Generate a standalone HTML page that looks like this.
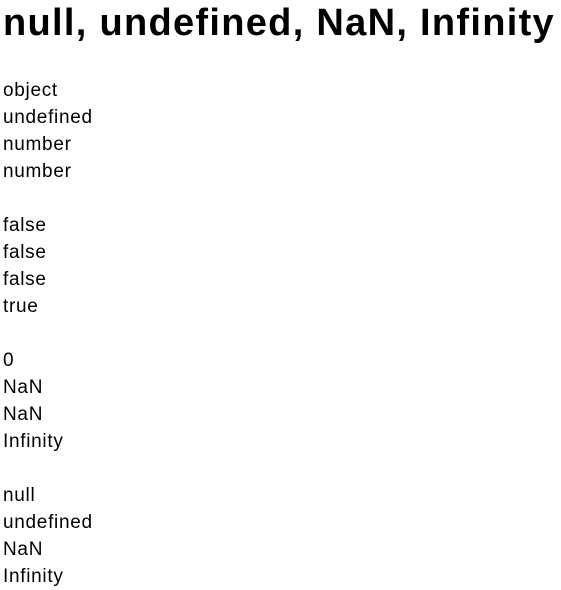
<!DOCTYPE html>
<html><head><meta charset="utf-8"><style>
body{margin:0;padding:0 0 0 3px;font-family:"Liberation Sans","Noto Sans CJK KR",sans-serif;color:#000;background:#fff;width:558px;height:589px;overflow:hidden}
h1{margin:0;padding-top:1px;font-size:38px;line-height:44px;font-weight:bold;white-space:nowrap;letter-spacing:1.3px}
.t{position:absolute;top:77px;left:3px;font-size:19px;line-height:27px;letter-spacing:0.7px}
</style></head><body>
<h1>null, undefined, NaN, Infinity</h1>
<div class="t">object<br>undefined<br>number<br>number<br><br>false<br>false<br>false<br>true<br><br>0<br>NaN<br>NaN<br>Infinity<br><br>null<br>undefined<br>NaN<br>Infinity</div>
</body></html>
